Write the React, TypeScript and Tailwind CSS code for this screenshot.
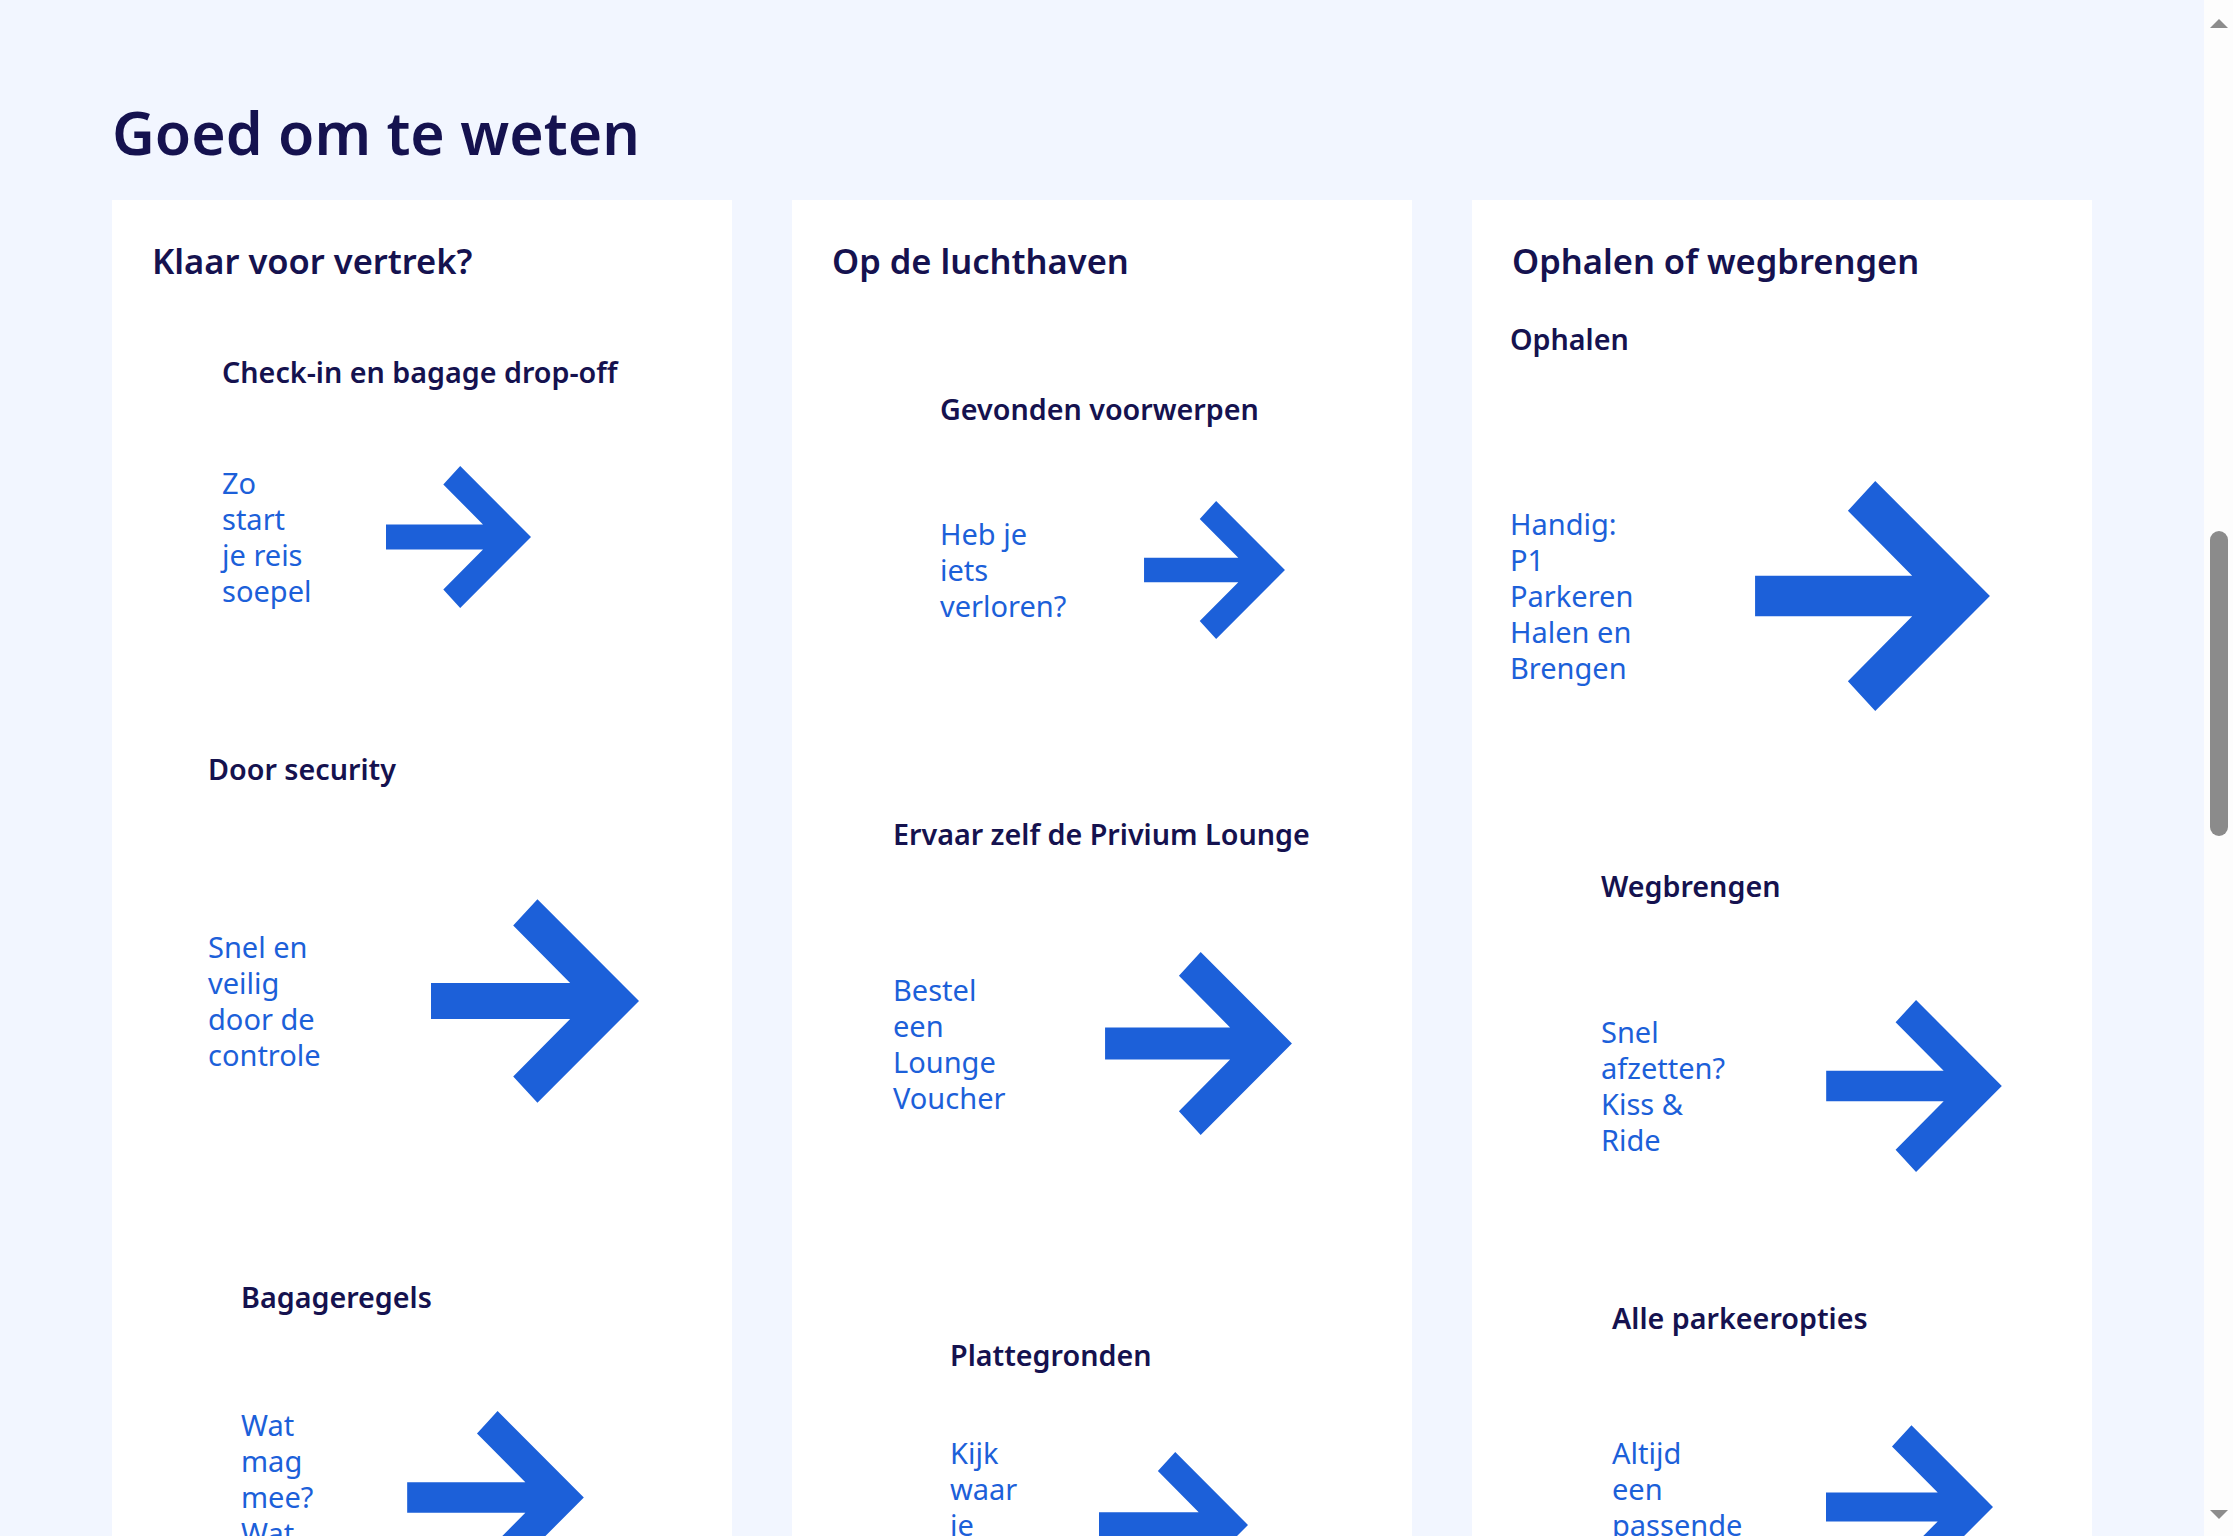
type Item = {
  title: string
  lines: string[]
  top: string
  left: string
  gap: string
  textW: string
  arrow: number
}

type Card = { title: string; items: Item[] }

const cards: Card[] = [
  {
    title: 'Klaar voor vertrek?',
    items: [
      { title: 'Check-in en bagage drop-off', lines: ['Zo', 'start', 'je reis', 'soepel'], top: 'mt-[72px]', left: 'ml-[70px]', gap: 'mt-[75px]', textW: 'w-[164px]', arrow: 145 },
      { title: 'Door security', lines: ['Snel en', 'veilig', 'door de', 'controle'], top: 'mt-[142px]', left: 'ml-[56px]', gap: 'mt-[112px]', textW: 'w-[223px]', arrow: 208 },
      { title: 'Bagageregels', lines: ['Wat', 'mag', 'mee?', 'Wat', 'niet?'], top: 'mt-[176px]', left: 'ml-[89px]', gap: 'mt-[92px]', textW: 'w-[166px]', arrow: 177 },
    ],
  },
  {
    title: 'Op de luchthaven',
    items: [
      { title: 'Gevonden voorwerpen', lines: ['Heb je', 'iets', 'verloren?'], top: 'mt-[109px]', left: 'ml-[108px]', gap: 'mt-[74px]', textW: 'w-[204px]', arrow: 141 },
      { title: 'Ervaar zelf de Privium Lounge', lines: ['Bestel', 'een', 'Lounge', 'Voucher'], top: 'mt-[177px]', left: 'ml-[61px]', gap: 'mt-[100px]', textW: 'w-[212px]', arrow: 187 },
      { title: 'Plattegronden', lines: ['Kijk', 'waar', 'je', 'naartoe', 'moet'], top: 'mt-[202px]', left: 'ml-[118px]', gap: 'mt-[62px]', textW: 'w-[149px]', arrow: 149 },
    ],
  },
  {
    title: 'Ophalen of wegbrengen',
    items: [
      { title: 'Ophalen', lines: ['Handig:', 'P1', 'Parkeren', 'Halen en', 'Brengen'], top: 'mt-[39px]', left: 'ml-[-2px]', gap: 'mt-[124px]', textW: 'w-[245px]', arrow: 235 },
      { title: 'Wegbrengen', lines: ['Snel', 'afzetten?', 'Kiss &', 'Ride'], top: 'mt-[157px]', left: 'ml-[89px]', gap: 'mt-[96px]', textW: 'w-[225px]', arrow: 176 },
      { title: 'Alle parkeeropties', lines: ['Altijd', 'een', 'passende', 'parkeerplek'], top: 'mt-[128px]', left: 'ml-[100px]', gap: 'mt-[89px]', textW: 'w-[214px]', arrow: 167 },
    ],
  },
]

function Arrow({ size }: { size: number }) {
  return (
    <svg width={size} height={Math.round((size * 142) / 145)} viewBox="0 0 145 142" className="shrink-0 text-[#1c60d9]">
      <polygon
        fill="currentColor"
        points="0,58.5 97,58.5 57.3,18.4 74.2,0 145,71 74.2,142 57.3,123.6 97,83.5 0,83.5"
      />
    </svg>
  )
}

function LinkItem({ item }: { item: Item }) {
  return (
    <div className={`${item.top} ${item.left} flex flex-col items-start`}>
      <h4 className="text-[28.7px] leading-[36px] font-semibold text-[#15124f] whitespace-nowrap">{item.title}</h4>
      <a href="#" className={`${item.gap} flex items-center`}>
        <span className={`${item.textW} shrink-0 text-[29px] leading-[36px] text-[#1c60d9]`}>
          {item.lines.map((l, i) => (
            <span key={i} className="block whitespace-nowrap">
              {l}
            </span>
          ))}
        </span>
        <Arrow size={item.arrow} />
      </a>
    </div>
  )
}

function Scrollbar() {
  return (
    <div className="w-[29px] shrink-0 bg-[#fdfdfd] flex flex-col items-center pt-[19px] pb-[17px]">
      <svg width="18" height="9" viewBox="0 0 18 9" className="text-[#8c8c8c]">
        <polygon points="9,0 18,9 0,9" fill="currentColor" />
      </svg>
      <div className="mt-[503px] h-[305px] w-[18px] rounded-full bg-[#8b8b8b]" />
      <div className="flex-1" />
      <svg width="18" height="9" viewBox="0 0 18 9" className="text-[#8c8c8c]">
        <polygon points="0,0 18,0 9,9" fill="currentColor" />
      </svg>
    </div>
  )
}

export default function App() {
  return (
    <div className="flex h-[1536px] overflow-hidden font-['Noto_Sans',sans-serif]">
      <main className="flex-1 flex flex-col bg-[#f2f6ff] px-[112px] pt-[102px]">
        <h2 className="text-[59px] leading-[60px] font-semibold text-[#15124f]">Goed om te weten</h2>
        <div className="mt-[38px] flex-1 grid grid-cols-3 gap-[60px]">
          {cards.map((card) => (
            <section key={card.title} className="bg-white px-[40px] pt-[40px]">
              <h3 className="text-[34.5px] leading-[42px] font-semibold text-[#15124f]">{card.title}</h3>
              {card.items.map((item) => (
                <LinkItem key={item.title} item={item} />
              ))}
            </section>
          ))}
        </div>
      </main>
      <Scrollbar />
    </div>
  )
}
